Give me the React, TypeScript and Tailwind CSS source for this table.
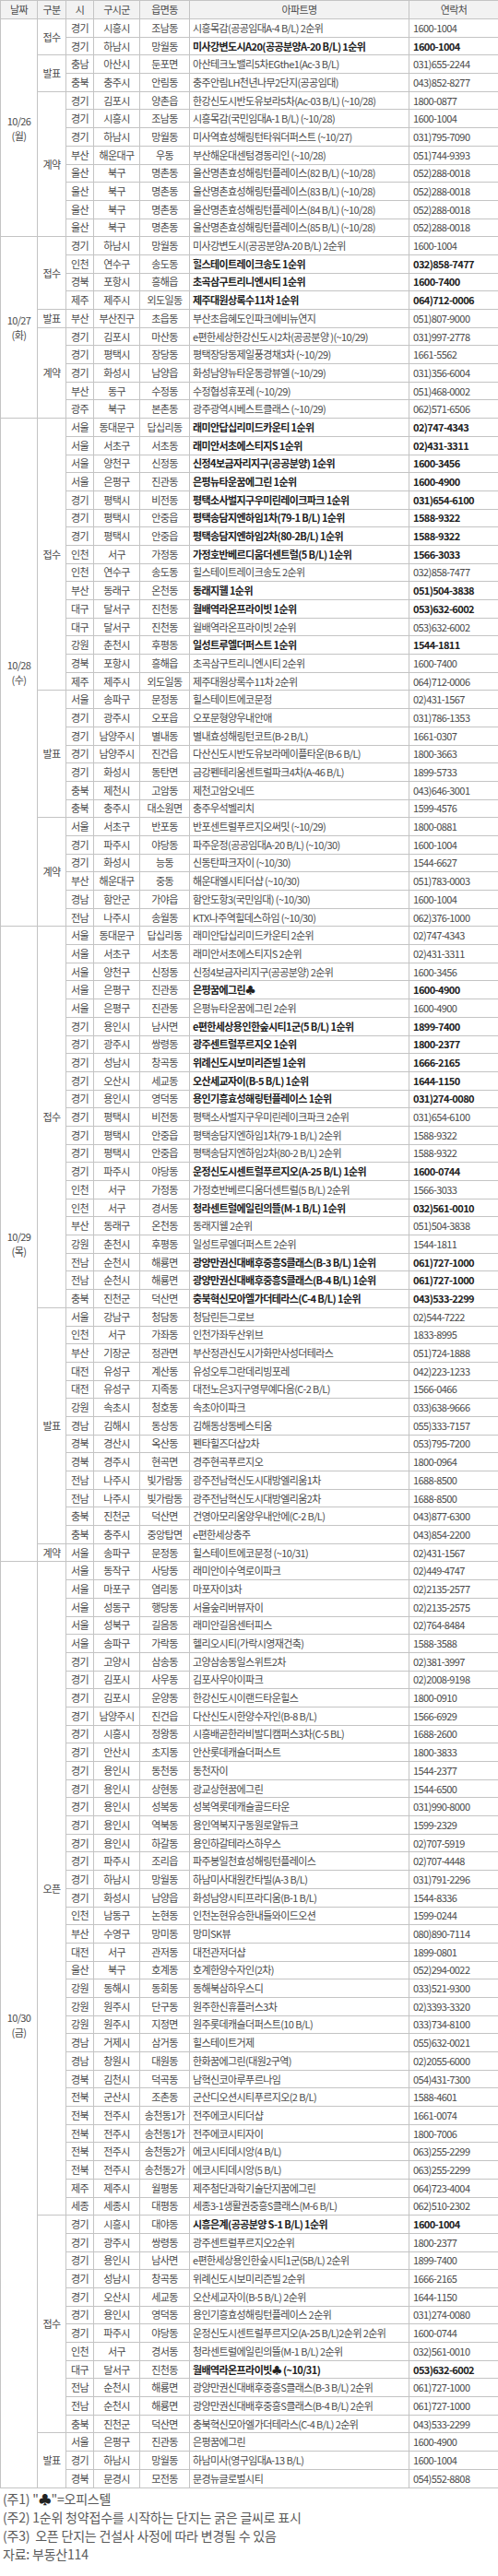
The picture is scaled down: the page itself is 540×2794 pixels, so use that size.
import React from "react";

type R = [string, string, string, string, string, number];
type Sec = [string, R[]];
type Day = { date: string; day: string; secs: Sec[] };

const DATA: Day[] = [
  {
    date: "10/26",
    day: "(월)",
    secs: [
      ["접수", [
        ["경기", "시흥시", "조남동", "시흥목감(공공임대A-4 B/L) 2순위", "1600-1004", 0],
        ["경기", "하남시", "망월동", "미사강변도시A20(공공분양A-20 B/L) 1순위", "1600-1004", 1],
      ]],
      ["발표", [
        ["충남", "아산시", "둔포면", "아산테크노밸리5차EGthe1(Ac-3 B/L)", "031)655-2244", 0],
        ["충북", "충주시", "안림동", "충주안림LH천년나무2단지(공공임대)", "043)852-8277", 0],
      ]],
      ["계약", [
        ["경기", "김포시", "양촌읍", "한강신도시반도유보라5차(Ac-03 B/L) (~10/28)", "1800-0877", 0],
        ["경기", "시흥시", "조남동", "시흥목감(국민임대A-1 B/L) (~10/28)", "1600-1004", 0],
        ["경기", "하남시", "망월동", "미사역효성해링턴타워더퍼스트 (~10/27)", "031)795-7090", 0],
        ["부산", "해운대구", "우동", "부산해운대센텀경동리인 (~10/28)", "051)744-9393", 0],
        ["울산", "북구", "명촌동", "울산명촌효성해링턴플레이스(82 B/L) (~10/28)", "052)288-0018", 0],
        ["울산", "북구", "명촌동", "울산명촌효성해링턴플레이스(83 B/L) (~10/28)", "052)288-0018", 0],
        ["울산", "북구", "명촌동", "울산명촌효성해링턴플레이스(84 B/L) (~10/28)", "052)288-0018", 0],
        ["울산", "북구", "명촌동", "울산명촌효성해링턴플레이스(85 B/L) (~10/28)", "052)288-0018", 0],
      ]],
    ],
  },
  {
    date: "10/27",
    day: "(화)",
    secs: [
      ["접수", [
        ["경기", "하남시", "망월동", "미사강변도시(공공분양A-20 B/L) 2순위", "1600-1004", 0],
        ["인천", "연수구", "송도동", "힐스테이트레이크송도 1순위", "032)858-7477", 1],
        ["경북", "포항시", "흥해읍", "초곡삼구트리니엔시티 1순위", "1600-7400", 1],
        ["제주", "제주시", "외도일동", "제주대원상록수11차 1순위", "064)712-0006", 1],
      ]],
      ["발표", [
        ["부산", "부산진구", "초읍동", "부산초읍혜도인파크에비뉴연지", "051)807-9000", 0],
      ]],
      ["계약", [
        ["경기", "김포시", "마산동", "e편한세상한강신도시2차(공공분양 )(~10/29)", "031)997-2778", 0],
        ["경기", "평택시", "장당동", "평택장당동제일풍경채3차 (~10/29)", "1661-5562", 0],
        ["경기", "화성시", "남양읍", "화성남양뉴타운동광뷰엘 (~10/29)", "031)356-6004", 0],
        ["부산", "동구", "수정동", "수정협성휴포레 (~10/29)", "051)468-0002", 0],
        ["광주", "북구", "본촌동", "광주광역시베스트클래스 (~10/29)", "062)571-6506", 0],
      ]],
    ],
  },
  {
    date: "10/28",
    day: "(수)",
    secs: [
      ["접수", [
        ["서울", "동대문구", "답십리동", "래미안답십리미드카운티 1순위", "02)747-4343", 1],
        ["서울", "서초구", "서초동", "래미안서초에스티지S 1순위", "02)431-3311", 1],
        ["서울", "양천구", "신정동", "신정4보금자리지구(공공분양) 1순위", "1600-3456", 1],
        ["서울", "은평구", "진관동", "은평뉴타운꿈에그린 1순위", "1600-4900", 1],
        ["경기", "평택시", "비전동", "평택소사벌지구우미린레이크파크 1순위", "031)654-6100", 1],
        ["경기", "평택시", "안중읍", "평택송담지엔하임1차(79-1 B/L) 1순위", "1588-9322", 1],
        ["경기", "평택시", "안중읍", "평택송담지엔하임2차(80-2B/L) 1순위", "1588-9322", 1],
        ["인천", "서구", "가정동", "가정호반베르디움더센트럴(5 B/L) 1순위", "1566-3033", 1],
        ["인천", "연수구", "송도동", "힐스테이트레이크송도 2순위", "032)858-7477", 0],
        ["부산", "동래구", "온천동", "동래지웰 1순위", "051)504-3838", 1],
        ["대구", "달서구", "진천동", "월배역라온프라이빗 1순위", "053)632-6002", 1],
        ["대구", "달서구", "진천동", "월배역라온프라이빗 2순위", "053)632-6002", 0],
        ["강원", "춘천시", "후평동", "일성트루엘더퍼스트 1순위", "1544-1811", 1],
        ["경북", "포항시", "흥해읍", "초곡삼구트리니엔시티 2순위", "1600-7400", 0],
        ["제주", "제주시", "외도일동", "제주대원상록수11차 2순위", "064)712-0006", 0],
      ]],
      ["발표", [
        ["서울", "송파구", "문정동", "힐스테이트에코문정", "02)431-1567", 0],
        ["경기", "광주시", "오포읍", "오포문형양우내안애", "031)786-1353", 0],
        ["경기", "남양주시", "별내동", "별내효성해링턴코트(B-2 B/L)", "1661-0307", 0],
        ["경기", "남양주시", "진건읍", "다산신도시반도유보라메이플타운(B-6 B/L)", "1800-3663", 0],
        ["경기", "화성시", "동탄면", "금강펜테리움센트럴파크4차(A-46 B/L)", "1899-5733", 0],
        ["충북", "제천시", "고암동", "제천고암오네뜨", "043)646-3001", 0],
        ["충북", "충주시", "대소원면", "충주우석벨리치", "1599-4576", 0],
      ]],
      ["계약", [
        ["서울", "서초구", "반포동", "반포센트럴푸르지오써밋 (~10/29)", "1800-0881", 0],
        ["경기", "파주시", "야당동", "파주운정(공공임대A-20 B/L) (~10/30)", "1600-1004", 0],
        ["경기", "화성시", "능동", "신동탄파크자이 (~10/30)", "1544-6627", 0],
        ["부산", "해운대구", "중동", "해운대엘시티더샵 (~10/30)", "051)783-0003", 0],
        ["경남", "함안군", "가야읍", "함안도항3(국민임대) (~10/30)", "1600-1004", 0],
        ["전남", "나주시", "송월동", "KTX나주역힐데스하임 (~10/30)", "062)376-1000", 0],
      ]],
    ],
  },
  {
    date: "10/29",
    day: "(목)",
    secs: [
      ["접수", [
        ["서울", "동대문구", "답십리동", "래미안답십리미드카운티 2순위", "02)747-4343", 0],
        ["서울", "서초구", "서초동", "래미안서초에스티지S 2순위", "02)431-3311", 0],
        ["서울", "양천구", "신정동", "신정4보금자리지구(공공분양) 2순위", "1600-3456", 0],
        ["서울", "은평구", "진관동", "은평꿈에그린♣", "1600-4900", 1],
        ["서울", "은평구", "진관동", "은평뉴타운꿈에그린 2순위", "1600-4900", 0],
        ["경기", "용인시", "남사면", "e편한세상용인한숲시티1군(5 B/L) 1순위", "1899-7400", 1],
        ["경기", "광주시", "쌍령동", "광주센트럴푸르지오 1순위", "1800-2377", 1],
        ["경기", "성남시", "창곡동", "위례신도시보미리즌빌 1순위", "1666-2165", 1],
        ["경기", "오산시", "세교동", "오산세교자이(B-5 B/L) 1순위", "1644-1150", 1],
        ["경기", "용인시", "영덕동", "용인기흥효성해링턴플레이스 1순위", "031)274-0080", 1],
        ["경기", "평택시", "비전동", "평택소사벌지구우미린레이크파크 2순위", "031)654-6100", 0],
        ["경기", "평택시", "안중읍", "평택송담지엔하임1차(79-1 B/L) 2순위", "1588-9322", 0],
        ["경기", "평택시", "안중읍", "평택송담지엔하임2차(80-2 B/L) 2순위", "1588-9322", 0],
        ["경기", "파주시", "야당동", "운정신도시센트럴푸르지오(A-25 B/L) 1순위", "1600-0744", 1],
        ["인천", "서구", "가정동", "가정호반베르디움더센트럴(5 B/L) 2순위", "1566-3033", 0],
        ["인천", "서구", "경서동", "청라센트럴에일린의뜰(M-1 B/L) 1순위", "032)561-0010", 1],
        ["부산", "동래구", "온천동", "동래지웰 2순위", "051)504-3838", 0],
        ["강원", "춘천시", "후평동", "일성트루엘더퍼스트 2순위", "1544-1811", 0],
        ["전남", "순천시", "해룡면", "광양만권신대배후중흥S클래스(B-3 B/L) 1순위", "061)727-1000", 1],
        ["전남", "순천시", "해룡면", "광양만권신대배후중흥S클래스(B-4 B/L) 1순위", "061)727-1000", 1],
        ["충북", "진천군", "덕산면", "충북혁신모아엘가더테라스(C-4 B/L) 1순위", "043)533-2299", 1],
      ]],
      ["발표", [
        ["서울", "강남구", "청담동", "청담린든그로브", "02)544-7222", 0],
        ["인천", "서구", "가좌동", "인천가좌두산위브", "1833-8995", 0],
        ["부산", "기장군", "정관면", "부산정관신도시가화만사성더테라스", "051)724-1888", 0],
        ["대전", "유성구", "계산동", "유성오투그란데리빙포레", "042)223-1233", 0],
        ["대전", "유성구", "지족동", "대전노은3지구영무예다음(C-2 B/L)", "1566-0466", 0],
        ["강원", "속초시", "청호동", "속초아이파크", "033)638-9666", 0],
        ["경남", "김해시", "동상동", "김해동상동베스티움", "055)333-7157", 0],
        ["경북", "경산시", "옥산동", "펜타힐즈더샵2차", "053)795-7200", 0],
        ["경북", "경주시", "현곡면", "경주현곡푸르지오", "1800-0964", 0],
        ["전남", "나주시", "빛가람동", "광주전남혁신도시대방엘리움1차", "1688-8500", 0],
        ["전남", "나주시", "빛가람동", "광주전남혁신도시대방엘리움2차", "1688-8500", 0],
        ["충북", "진천군", "덕산면", "건영아모리움양우내안에(C-2 B/L)", "043)877-6300", 0],
        ["충북", "충주시", "중앙탑면", "e편한세상충주", "043)854-2200", 0],
      ]],
      ["계약", [
        ["서울", "송파구", "문정동", "힐스테이트에코문정 (~10/31)", "02)431-1567", 0],
      ]],
    ],
  },
  {
    date: "10/30",
    day: "(금)",
    secs: [
      ["오픈", [
        ["서울", "동작구", "사당동", "래미안이수역로이파크", "02)449-4747", 0],
        ["서울", "마포구", "염리동", "마포자이3차", "02)2135-2577", 0],
        ["서울", "성동구", "행당동", "서울숲리버뷰자이", "02)2135-2575", 0],
        ["서울", "성북구", "길음동", "래미안길음센터피스", "02)764-8484", 0],
        ["서울", "송파구", "가락동", "헬리오시티(가락시영재건축)", "1588-3588", 0],
        ["경기", "고양시", "삼송동", "고양삼송동일스위트2차", "02)381-3997", 0],
        ["경기", "김포시", "사우동", "김포사우아이파크", "02)2008-9198", 0],
        ["경기", "김포시", "운양동", "한강신도시이랜드타운힐스", "1800-0910", 0],
        ["경기", "남양주시", "진건읍", "다산신도시한양수자인(B-8 B/L)", "1566-6929", 0],
        ["경기", "시흥시", "정왕동", "시흥배곧한라비발디캠퍼스3차(C-5 BL)", "1688-2600", 0],
        ["경기", "안산시", "초지동", "안산롯데캐슬더퍼스트", "1800-3833", 0],
        ["경기", "용인시", "동천동", "동천자이", "1544-2377", 0],
        ["경기", "용인시", "상현동", "광교상현꿈에그린", "1544-6500", 0],
        ["경기", "용인시", "성복동", "성복역롯데캐슬골드타운", "031)990-8000", 0],
        ["경기", "용인시", "역북동", "용인역북지구동원로얄듀크", "1599-2329", 0],
        ["경기", "용인시", "하갈동", "용인하갈테라스하우스", "02)707-5919", 0],
        ["경기", "파주시", "조리읍", "파주봉일천효성해링턴플레이스", "02)707-4448", 0],
        ["경기", "하남시", "망월동", "하남미사대원칸타빌(A-3 B/L)", "031)791-2296", 0],
        ["경기", "화성시", "남양읍", "화성남양시티프라디움(B-1 B/L)", "1544-8336", 0],
        ["인천", "남동구", "논현동", "인천논현유승한내들와이드오션", "1599-0244", 0],
        ["부산", "수영구", "망미동", "망미SK뷰", "080)890-7114", 0],
        ["대전", "서구", "관저동", "대전관저더샵", "1899-0801", 0],
        ["울산", "북구", "호계동", "호계한양수자인(2차)", "052)294-0022", 0],
        ["강원", "동해시", "동회동", "동해북삼하우스디", "033)521-9300", 0],
        ["강원", "원주시", "단구동", "원주한신휴플러스3차", "02)3393-3320", 0],
        ["강원", "원주시", "지정면", "원주롯데캐슬더퍼스트(10 B/L)", "033)734-8100", 0],
        ["경남", "거제시", "삼거동", "힐스테이트거제", "055)632-0021", 0],
        ["경남", "창원시", "대원동", "한화꿈에그린(대원2구역)", "02)2055-6000", 0],
        ["경북", "김천시", "덕곡동", "남혁신코아루푸르나임", "054)431-7300", 0],
        ["전북", "군산시", "조촌동", "군산디오션시티푸르지오(2 B/L)", "1588-4601", 0],
        ["전북", "전주시", "송천동1가", "전주에코시티더샵", "1661-0074", 0],
        ["전북", "전주시", "송천동1가", "전주에코시티자이", "1800-7006", 0],
        ["전북", "전주시", "송천동2가", "에코시티데시앙(4 B/L)", "063)255-2299", 0],
        ["전북", "전주시", "송천동2가", "에코시티데시앙(5 B/L)", "063)255-2299", 0],
        ["제주", "제주시", "월평동", "제주첨단과학기술단지꿈에그린", "064)723-4004", 0],
        ["세종", "세종시", "대평동", "세종3-1생활권중흥S클래스(M-6 B/L)", "062)510-2302", 0],
      ]],
      ["접수", [
        ["경기", "시흥시", "대야동", "시흥은계(공공분양 S-1 B/L) 1순위", "1600-1004", 1],
        ["경기", "광주시", "쌍령동", "광주센트럴푸르지오2순위", "1800-2377", 0],
        ["경기", "용인시", "남사면", "e편한세상용인한숲시티1군(5B/L) 2순위", "1899-7400", 0],
        ["경기", "성남시", "창곡동", "위례신도시보미리즌빌 2순위", "1666-2165", 0],
        ["경기", "오산시", "세교동", "오산세교자이(B-5 B/L) 2순위", "1644-1150", 0],
        ["경기", "용인시", "영덕동", "용인기흥효성해링턴플레이스 2순위", "031)274-0080", 0],
        ["경기", "파주시", "야당동", "운정신도시센트럴푸르지오(A-25 B/L)2순위 2순위", "1600-0744", 0],
        ["인천", "서구", "경서동", "청라센트럴에일린의뜰(M-1 B/L) 2순위", "032)561-0010", 0],
        ["대구", "달서구", "진천동", "월배역라온프라이빗♣ (~10/31)", "053)632-6002", 1],
        ["전남", "순천시", "해룡면", "광양만권신대배후중흥S클래스(B-3 B/L) 2순위", "061)727-1000", 0],
        ["전남", "순천시", "해룡면", "광양만권신대배후중흥S클래스(B-4 B/L) 2순위", "061)727-1000", 0],
        ["충북", "진천군", "덕산면", "충북혁신모아엘가더테라스(C-4 B/L) 2순위", "043)533-2299", 0],
      ]],
      ["발표", [
        ["서울", "은평구", "진관동", "은평꿈에그린", "1600-4900", 0],
        ["경기", "하남시", "망월동", "하남미사(영구임대A-13 B/L)", "1600-1004", 0],
        ["경북", "문경시", "모전동", "문경뉴글로벌시티", "054)552-8808", 0],
      ]],
    ],
  },
];

const cell = "border border-[#c4c4c4] p-0 text-center align-middle whitespace-nowrap";
const leftCell = "border border-[#c4c4c4] p-0 pl-[3px] text-left align-middle whitespace-nowrap";
const telCell = "border border-[#c4c4c4] p-0 pl-[4px] text-left align-middle whitespace-nowrap";

export default function App() {
  const rows: React.ReactNode[] = [];
  DATA.forEach((d, di) => {
    const total = d.secs.reduce((s, x) => s + x[1].length, 0);
    let first = true;
    d.secs.forEach(([label, list], si) => {
      list.forEach((r, ri) => {
        const b = r[5] === 1;
        rows.push(
          <tr key={`${di}-${si}-${ri}`} className="h-[19.7px]">
            {first && (
              <td rowSpan={total} className={`${cell} bg-white leading-[16px]`}>
                {d.date}
                <br />
                {d.day}
              </td>
            )}
            {ri === 0 && (
              <td rowSpan={list.length} className={cell}>
                {label}
              </td>
            )}
            <td className={cell}>{r[0]}</td>
            <td className={cell}>{r[1]}</td>
            <td className={cell}>{r[2]}</td>
            <td className={b ? `${leftCell} font-bold text-[#222]` : leftCell}>{r[3]}</td>
            <td className={b ? `${telCell} font-bold text-[#222]` : telCell}>{r[4]}</td>
          </tr>
        );
        first = false;
      });
    });
  });

  return (
    <div className="w-[540px] bg-white font-['Noto_Sans_CJK_KR',sans-serif] text-[#4a4a4a]">
      <table className="w-[540px] table-fixed border-collapse text-[11px] leading-[13px] tracking-[-0.6px]">
        <colgroup>
          <col className="w-[40px]" />
          <col className="w-[31px]" />
          <col className="w-[30px]" />
          <col className="w-[50px]" />
          <col className="w-[54px]" />
          <col className="w-[238px]" />
          <col className="w-[97px]" />
        </colgroup>
        <thead>
          <tr className="h-[20px] bg-[#f2f2f2]">
            <th className={`${cell} font-normal`}>날짜</th>
            <th className={`${cell} font-normal`}>구분</th>
            <th className={`${cell} font-normal`}>시</th>
            <th className={`${cell} font-normal`}>구시군</th>
            <th className={`${cell} font-normal`}>읍면동</th>
            <th className={`${cell} font-normal`}>아파트명</th>
            <th className={`${cell} font-normal`}>연락처</th>
          </tr>
        </thead>
        <tbody>{rows}</tbody>
      </table>
      <div className="pl-[3px] pt-[1px] text-[14px] leading-[20px] text-[#5a5a5a] tracking-[-0.2px]">
        <p className="whitespace-pre">
          (주1) "<span className="font-bold text-[#222]">♣</span>"=오피스텔
        </p>
        <p className="whitespace-pre">(주2) 1순위 청약접수를 시작하는 단지는 굵은 글씨로 표시</p>
        <p className="whitespace-pre">(주3)  오픈 단지는 건설사 사정에 따라 변경될 수 있음</p>
        <p className="whitespace-pre">자료: 부동산114</p>
      </div>
      <div className="h-[70px]" />
    </div>
  );
}
